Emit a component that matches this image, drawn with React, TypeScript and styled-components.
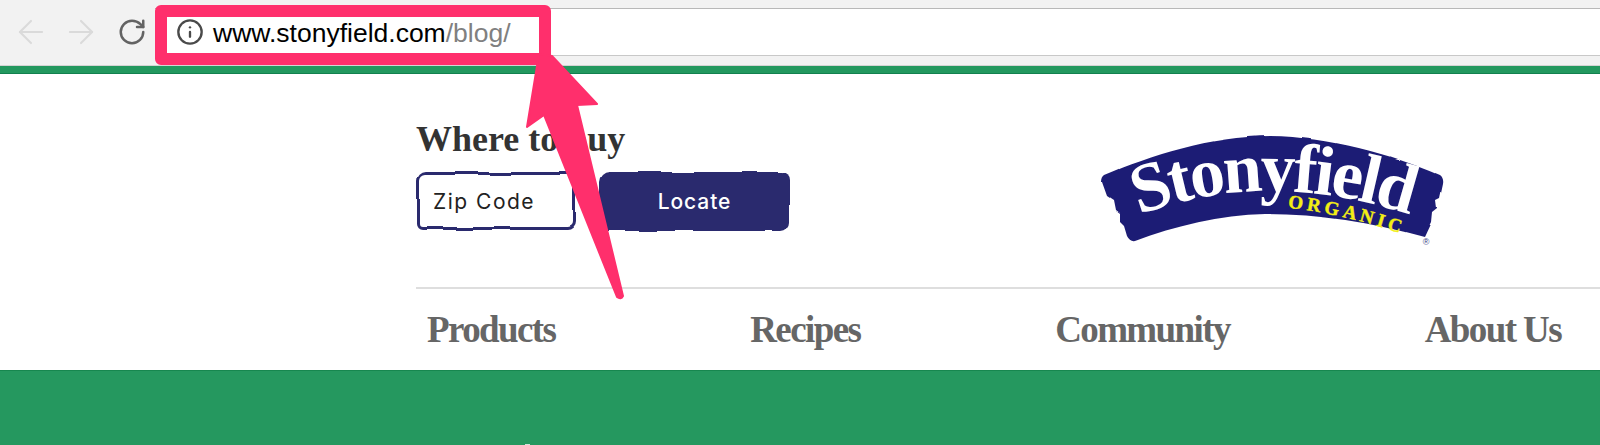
import * as React from "react";
import styled, { createGlobalStyle } from "styled-components";
import { ArrowLeft, ArrowRight, Info, RotateCw } from "lucide-react";

const GlobalStyle = createGlobalStyle`
  html, body {
    margin: 0;
    padding: 0;
    background: #fff;
    overflow: hidden;
  }
`;

const App = () => {
  return (
    <Page>
      <GlobalStyle />
      <RoughFilter />
      <Toolbar>
        <NavIcon><ArrowLeft size={38} strokeWidth={1.3} color="#dadada" /></NavIcon>
        <NavIcon><ArrowRight size={38} strokeWidth={1.3} color="#dadada" /></NavIcon>
        <ReloadIcon><RotateCw size={30} strokeWidth={2} color="#636363" /></ReloadIcon>
        <AddressBar>
          <Info size={28} strokeWidth={2} color="#4a4a4a" />
          <Url>www.stonyfield.com<UrlPath>/blog/</UrlPath></Url>
        </AddressBar>
      </Toolbar>
      <GreenStrip />
      <Main>
        <HeaderRow>
          <BuyColumn>
            <BuyTitle>Where to buy</BuyTitle>
            <BuyForm>
              <ZipBox>Zip Code</ZipBox>
              <LocateButton>Locate</LocateButton>
            </BuyForm>
          </BuyColumn>
          <Logo />
        </HeaderRow>
        <NavRow>
          <NavLink>Products</NavLink>
          <NavLink>Recipes</NavLink>
          <NavLink>Community</NavLink>
          <NavLink>About Us</NavLink>
        </NavRow>
      </Main>
      <GreenFooter>
        <FooterSpeck />
      </GreenFooter>
      <HighlightBox />
      <Arrow />
    </Page>
  );
};

export default App;

// wobbly edges, the site's buttons and logo look hand cut
const RoughFilter = () => (
  <FilterDefs width="0" height="0">
    <filter id="rough" x="-20%" y="-20%" width="140%" height="140%">
      <feTurbulence type="fractalNoise" baseFrequency="0.03" numOctaves="1" seed="4" />
      <feDisplacementMap in="SourceGraphic" scale="5" xChannelSelector="R" yChannelSelector="G" />
      <feGaussianBlur stdDeviation="0.4" />
    </filter>
    <filter id="roughSoft" x="-10%" y="-10%" width="120%" height="120%">
      <feTurbulence type="fractalNoise" baseFrequency="0.03" numOctaves="1" seed="7" />
      <feDisplacementMap in="SourceGraphic" scale="3" xChannelSelector="R" yChannelSelector="G" />
      <feGaussianBlur stdDeviation="0.5" />
    </filter>
  </FilterDefs>
);

const Logo = () => (
  <LogoSvg viewBox="0 0 380 140" width="380" height="140">
    <LogoShape
      d="M25 55 C70 36 130 16 190 16 C250 17 310 34 360 55 Q364 58 363 64 L360 78 L356 80 L357 88 L352 92 L351 102 L344 117
         C290 102 240 94 185 94 C140 95 95 106 55 121 Q50 122 47 116 L44 106 L40 102 L40 94 L35 90 L33 80 L27 76 L22 62 Q22 57 25 55 Z"
    />
    <path id="logoArc" fill="none" d="M46 100 Q185 42 345 100" />
    <path id="organicArc" fill="none" d="M208 88 Q270 94 345 122" />
    <LogoName>
      <textPath href="#logoArc" startOffset="14">Stonyfield</textPath>
    </LogoName>
    <LogoTag>
      <textPath href="#organicArc">ORGANIC</textPath>
    </LogoTag>
    <LogoMark x="346" y="125">®</LogoMark>
  </LogoSvg>
);

const Arrow = () => (
  <ArrowSvg viewBox="0 0 1600 445" width="1600" height="445">
    <path
      fill="#ff2f6c"
      stroke="#ff2f6c"
      strokeWidth="2"
      strokeLinejoin="round"
      d="M539 54 L552 56 L597 104 L577 105 L623 296 Q621 300 617 297 L544 115 L527 127 Z"
    />
  </ArrowSvg>
);

const Page = styled.div`
  position: relative;
  width: 1600px;
  height: 445px;
  overflow: hidden;
  display: flex;
  flex-direction: column;
  background: #fff;
`;

const FilterDefs = styled.svg`
  position: absolute;
`;

const Toolbar = styled.div`
  height: 66px;
  box-sizing: border-box;
  padding: 8px 0 9px 12px;
  display: flex;
  align-items: center;
  background: #f2f2f2;
  border-bottom: 1px solid #d4d4d4;
`;

const NavIcon = styled.span`
  width: 50px;
  display: flex;
  svg {
    display: block;
  }
`;

const ReloadIcon = styled(NavIcon)`
  width: 43px;
  box-sizing: border-box;
  padding-left: 5px;
`;

const AddressBar = styled.div`
  flex: 1;
  height: 48px;
  box-sizing: border-box;
  padding-left: 21px;
  display: flex;
  align-items: center;
  gap: 9px;
  background: #fff;
  border-top: 1px solid #b8b8b8;
  border-bottom: 1px solid #c8c8c8;
`;

const Url = styled.span`
  padding-top: 2px;
  font-family: "Liberation Sans", Arial, sans-serif;
  font-size: 26.5px;
  color: #000;
`;

const UrlPath = styled.span`
  color: #808080;
`;

const GreenStrip = styled.div`
  height: 8px;
  box-sizing: border-box;
  background: #23985f;
  border-bottom: 1px solid #12804f;
`;

const Main = styled.div`
  flex: 1;
  padding-left: 416px;
  display: flex;
  flex-direction: column;
`;

const HeaderRow = styled.div`
  height: 215px;
  box-sizing: border-box;
  display: flex;
  border-bottom: 2px solid #dedede;
`;

const BuyColumn = styled.div`
  width: 664px;
  padding-top: 45px;
`;

const BuyTitle = styled.h2`
  margin: 0;
  font-family: "Liberation Serif", "Times New Roman", serif;
  font-weight: 700;
  font-size: 36px;
  line-height: 40px;
  color: #333;
`;

const BuyForm = styled.div`
  margin-top: 13px;
  padding-left: 1px;
  display: flex;
  gap: 25px;
`;

const ZipBox = styled.div`
  position: relative;
  isolation: isolate;
  width: 158px;
  height: 58px;
  box-sizing: border-box;
  padding-left: 16px;
  display: flex;
  align-items: center;
  font-family: Inter, sans-serif;
  font-size: 21px;
  letter-spacing: 1.5px;
  color: #222;
  &::before {
    content: "";
    position: absolute;
    inset: 0;
    background: #fff;
    border: 3px solid #2c2a6e;
    border-radius: 9px 7px 8px 6px;
    filter: url(#rough);
    z-index: -1;
  }
`;

const LocateButton = styled.div`
  position: relative;
  isolation: isolate;
  width: 189px;
  height: 59px;
  display: flex;
  align-items: center;
  justify-content: center;
  font-family: Inter, sans-serif;
  font-weight: 500;
  font-size: 21px;
  letter-spacing: 0.9px;
  color: #fff;
  &::before {
    content: "";
    position: absolute;
    inset: 0;
    background: #2c2a6e;
    border-radius: 10px 8px 9px 8px;
    filter: url(#rough);
    z-index: -1;
  }
`;

const LogoSvg = styled.svg`
  display: block;
  margin-top: 46px;
`;

const LogoShape = styled.path`
  fill: #1e1c74;
  filter: url(#roughSoft);
`;

const LogoName = styled.text`
  font-family: "Liberation Serif", serif;
  font-weight: 700;
  font-size: 70px;
  letter-spacing: -3px;
  fill: #fff;
`;

const LogoTag = styled.text`
  font-family: "Liberation Serif", serif;
  font-weight: 700;
  font-size: 19px;
  letter-spacing: 3.8px;
  fill: #f3ee14;
  stroke: #f3ee14;
  stroke-width: 0.4px;
`;

const LogoMark = styled.text`
  font-family: "Liberation Sans", sans-serif;
  font-size: 9px;
  text-anchor: middle;
  fill: #3c3f86;
`;

const NavRow = styled.nav`
  flex: 1;
  padding: 0 39px 0 11px;
  display: flex;
  align-items: center;
  justify-content: space-between;
`;

const NavLink = styled.a`
  font-family: "Liberation Serif", "Times New Roman", serif;
  font-weight: 700;
  font-size: 37px;
  letter-spacing: -1.6px;
  color: #666;
`;

const GreenFooter = styled.div`
  position: relative;
  height: 75px;
  background: #25985f;
  border-top: 1px solid #17874f;
  box-sizing: border-box;
`;

const FooterSpeck = styled.span`
  position: absolute;
  left: 525px;
  bottom: 0;
  width: 5px;
  height: 1px;
  background: #cfe6da;
`;

const HighlightBox = styled.div`
  position: absolute;
  left: 155px;
  top: 5px;
  width: 396px;
  height: 60px;
  box-sizing: border-box;
  border: 12px solid #ff2f6c;
  border-radius: 6px;
`;

const ArrowSvg = styled.svg`
  position: absolute;
  left: 0;
  top: 0;
  pointer-events: none;
`;
